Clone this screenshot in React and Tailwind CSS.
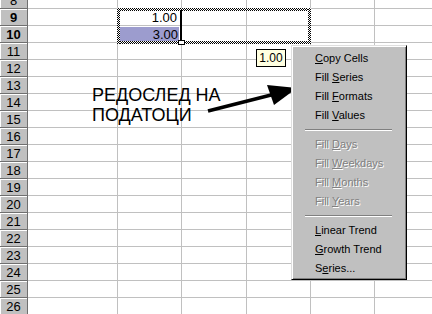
import React from 'react';

const rows = [8, 9, 10, 11, 12, 13, 14, 15, 16, 17, 18, 19, 20, 21, 22, 23, 24, 25, 26];

const menuGroups = [
    [
        { pre: '', key: 'C', post: 'opy Cells' },
        { pre: 'Fill ', key: 'S', post: 'eries' },
        { pre: 'Fill ', key: 'F', post: 'ormats' },
        { pre: 'Fill ', key: 'V', post: 'alues' },
    ],
    [
        { pre: 'Fill ', key: 'D', post: 'ays', off: true },
        { pre: 'Fill ', key: 'W', post: 'eekdays', off: true },
        { pre: 'Fill ', key: 'M', post: 'onths', off: true },
        { pre: 'Fill ', key: 'Y', post: 'ears', off: true },
    ],
    [
        { pre: '', key: 'L', post: 'inear Trend' },
        { pre: '', key: 'G', post: 'rowth Trend' },
        { pre: 'S', key: 'e', post: 'ries...' },
    ],
];

const Cell = ({ className = '', children }) => (
    <div className={`h-full shrink-0 border-r border-[#c0c0c0] ${className}`}>{children}</div>
);

const Row = ({ n }) => {
    const selected = n === 9 || n === 10;
    return (
        <div className={`flex h-[17px] shrink-0 border-b border-[#c0c0c0] ${n === 8 ? '-mt-[8px]' : ''}`}>
            <div
                className={`w-[28px] h-[17px] -mb-px shrink-0 flex items-center justify-center bg-[#c0c0c0] border-r border-b border-[#6f6f6f] shadow-[inset_1px_1px_0_#fff] text-[13px] leading-none text-black ${selected ? 'font-bold' : ''}`}
            >
                {n}
            </div>
            <Cell className="w-[90px]" />
            <Cell className="w-[64px] flex items-center justify-end">
                {n === 9 && <span className="pr-[4px] text-[13px] leading-none">1.00</span>}
                {n === 10 && (
                    <div className="ml-[1px] mr-[2px] h-[15px] w-full flex items-center justify-end bg-[#9c9cce]">
                        <span className="pr-[1px] text-[13px] leading-none">3.00</span>
                    </div>
                )}
            </Cell>
            <Cell className="w-[65px]" />
            <Cell className="w-[64px]" />
            <Cell className="w-[64px]" />
            <Cell className="w-[64px]" />
        </div>
    );
};

const ants = 'absolute bg-[repeating-conic-gradient(#000_0%_25%,#fff_0%_50%)] bg-[length:2px_2px]';

const App = () => {
    return (
        <div className="relative w-[432px] h-[314px] overflow-hidden bg-white font-['Liberation_Sans',Arial,sans-serif] text-black">
            <div className="flex flex-col">
                {rows.map((n) => (
                    <Row key={n} n={n} />
                ))}
            </div>

            {/* marching ants round the fill range */}
            <div className={`${ants} left-[117px] top-[8px] w-[194px] h-[3px]`} />
            <div className={`${ants} left-[117px] top-[41px] w-[194px] h-[3px]`} />
            <div className={`${ants} left-[117px] top-[8px] w-[3px] h-[36px]`} />
            <div className={`${ants} left-[308px] top-[8px] w-[3px] h-[36px]`} />

            {/* active range edge + fill handle */}
            <div className="absolute left-[180px] top-[10px] w-[2px] h-[31px] bg-black" />
            <div className="absolute left-[178px] top-[40px] w-[7px] h-[5px] border border-black bg-white" />

            {/* tooltip */}
            <div className="absolute left-[256px] top-[49px] w-[30px] h-[18px] flex items-center justify-center bg-[#ffffe1] border border-black text-[12px] leading-none">
                1.00
            </div>

            {/* annotation */}
            <div className="absolute left-[92px] top-[85px] text-[18px] leading-[20px]">
                <div>РЕДОСЛЕД НА</div>
                <div>ПОДАТОЦИ</div>
            </div>
            <svg className="absolute left-0 top-0 pointer-events-none" width="432" height="314">
                <line x1="208" y1="111" x2="275" y2="94" stroke="#000" strokeWidth="3.5" />
                <polygon points="297,88 267,85 274,105" fill="#000" />
            </svg>

            {/* fill menu */}
            <div className="absolute left-[291px] top-[45px] w-[116px] pt-[3px] pb-[1px] bg-[#c0c0c0] border border-t-[#dfdfdf] border-l-[#dfdfdf] border-r-black border-b-black shadow-[inset_1px_1px_0_#fff,inset_-1px_-1px_0_#808080] text-[11px]">
                {menuGroups.map((group, gi) => (
                    <div key={gi}>
                        {gi > 0 && (
                            <div className="h-[10px] flex items-center ml-[13px] mr-[14px]">
                                <div className="w-full border-t border-b border-t-[#808080] border-b-white" />
                            </div>
                        )}
                        {group.map((item) => (
                            <div
                                key={item.pre + item.key + item.post}
                                className={`h-[19px] leading-[19px] pl-[23px] whitespace-pre ${
                                    item.off ? 'text-[#808080] [text-shadow:1px_1px_0_#fff]' : 'text-black'
                                }`}
                            >
                                {item.pre}
                                <u>{item.key}</u>
                                {item.post}
                            </div>
                        ))}
                    </div>
                ))}
            </div>
        </div>
    );
};

export default App;
